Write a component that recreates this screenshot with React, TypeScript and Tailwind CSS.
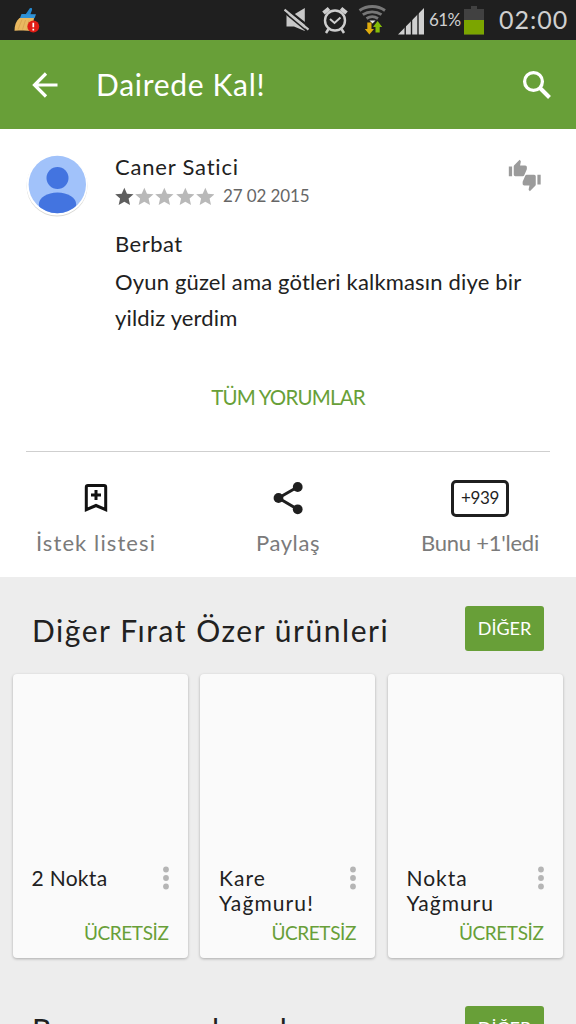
import type { ReactNode } from "react";

const apps = [
  { id: 1, title: "2 Nokta", price: "ÜCRETSİZ", tracking: "tracking-[0.3px]" },
  { id: 2, title: "Kare Yağmuru!", price: "ÜCRETSİZ", tracking: "tracking-[1.1px]" },
  { id: 3, title: "Nokta Yağmuru", price: "ÜCRETSİZ", tracking: "tracking-[1px]" },
];

const STAR = "M12 1.6l3.1 7.1 7.7.7-5.8 5.1 1.7 7.6L12 18.1l-6.7 4 1.7-7.6-5.8-5.1 7.7-.7z";
const THUMB =
  "M1 21h4V9H1v12zm22-11c0-1.1-.9-2-2-2h-6.31l.95-4.57.03-.32c0-.41-.17-.79-.44-1.06L14.17 1 7.59 7.59C7.22 7.95 7 8.45 7 9v10c0 1.1.9 2 2 2h9c.83 0 1.54-.5 1.84-1.22l3.02-7.05c.09-.23.14-.47.14-.73v-2z";

function CleanerIcon() {
  return (
    <svg className="ml-[13px] h-8 w-7" viewBox="0 0 28 32">
      <path d="M16 5.500c1-2.200 3.800-1.900 3 .4L17 11.500l-4.500-1z" fill="#2589d0" />
      <path d="M8.500 10l14.500.2-1.500 4-14.500-.2z" fill="#2f92d6" />
      <path d="M6.500 14h14.500l-2 13c-5.500-.8-11.500-.6-17.500-.3 0-5.300 1.500-9.500 5-12.700z" fill="#e9b860" />
      <path d="M9 15.500l-4 10M12.500 16l-3 9.500M16 16.500l-2 9" stroke="#d29d4b" strokeWidth="0.700" fill="none" />
      <circle cx="20.300" cy="22.500" r="5.900" fill="#e01b14" />
      <path d="M20.300 18.800v4.400M20.300 24.700v1.700" stroke="#fff" strokeWidth="1.700" />
    </svg>
  );
}

function StatusBar() {
  return (
    <div className="flex h-10 items-center bg-[#1f1f1f] text-[#cfcfcf]">
      <CleanerIcon />
      <svg className="ml-[243px] h-10 w-[27px] shrink-0" viewBox="284 0 27 40">
        <path d="M286.500 14.500h7.500L304.800 8v23L294 26.500h-7.500z" fill="#c8c8c8" />
        <path d="M285 7.800l25.500 20" stroke="#1f1f1f" strokeWidth="2.400" />
        <path d="M284.500 9.700l24 20" stroke="#c8c8c8" strokeWidth="2.200" />
        <path d="M284 12.200l22 18.300" stroke="#1f1f1f" strokeWidth="1.500" />
      </svg>
      <svg className="ml-[10px] h-10 w-7 shrink-0" viewBox="321 0 28 40" fill="none" stroke="#cdcdcd">
        <circle cx="335" cy="20.500" r="10" strokeWidth="2.400" />
        <path d="M330 19l4.500 4 6-5.500" strokeWidth="2" />
        <path d="M323.500 13l5.500-4.500M341 8.500l5.500 4.500" strokeWidth="4" />
        <path d="M328.500 29l-2.500 4M341.500 29l2.500 4" strokeWidth="2.500" />
      </svg>
      <svg className="ml-2 h-10 w-[30px] shrink-0" viewBox="357 0 30 40" fill="none">
        <path d="M359.500 10.500c7.500-5.300 18-5.300 25.500 0M362.800 14.700c5.500-3.800 13.200-3.800 18.700 0M366.500 18.500c3.500-2.200 8-2.200 11.500 0" stroke="#777" strokeWidth="2.800" />
        <path d="M369.500 20.500h6l-3 3z" fill="#eee" />
        <path d="M367.300 22.500h4.200v6.500h2.500l-4.600 5.500-4.600-5.500h2.500z" fill="#dfac0d" />
        <path d="M375.500 32.500h4.200V27h2.500l-4.600-6-4.600 6h2.500z" fill="#85bd08" />
      </svg>
      <svg className="ml-[11px] h-10 w-[26px] shrink-0" viewBox="398 0 26 40">
        <path d="M398 34.500L424 8v26.500z" fill="#d0d0d0" />
        <path d="M405.200 22v14M411.500 16v20M418 10v26" stroke="#1f1f1f" strokeWidth="1.400" />
      </svg>
      <span className="ml-[5px] w-[33px] text-[17px] tracking-[-0.6px] whitespace-nowrap">61%</span>
      <svg className="ml-[2px] h-10 w-5 shrink-0" viewBox="464 0 20 40">
        <path d="M464 9h7V6h6v3h7v25.500h-20z" fill="#414141" />
        <path d="M464 20h20v14.500h-20z" fill="#7ba500" />
      </svg>
      <span className="ml-[15px] text-[25px] tracking-[1px] whitespace-nowrap">02:00</span>
    </div>
  );
}

function Header() {
  return (
    <header className="flex h-[89px] items-center bg-[#689f38] text-white">
      <svg className="ml-8 h-[26px] w-[26px]" viewBox="0 0 26 26" fill="none" stroke="currentColor" strokeWidth="3.200">
        <path d="M25.500 13H3M14 1.500L2.500 13 14 24.500" />
      </svg>
      <h1 className="ml-[38px] text-[30px] tracking-[0.7px]">Dairede Kal!</h1>
      <svg className="mr-[24px] ml-auto h-[30px] w-[30px]" viewBox="0 0 30 30" fill="none" stroke="currentColor">
        <circle cx="11.500" cy="11.500" r="8.900" strokeWidth="3.300" />
        <path d="M18 18l9.500 9.500" strokeWidth="4" />
      </svg>
    </header>
  );
}

function Avatar() {
  return (
    <svg className="mt-[3px] ml-[26px] h-[63px] w-[62px] shrink-0" viewBox="0 0 62 63">
      <circle cx="31" cy="32" r="30.500" fill="#d9d9d5" />
      <circle cx="31" cy="31" r="30.500" fill="#fff" />
      <clipPath id="face">
        <circle cx="31.300" cy="30.500" r="28.700" />
      </clipPath>
      <g clipPath="url(#face)">
        <path d="M0 0h62v62H0z" fill="#a1c2fa" />
        <circle cx="31.500" cy="24" r="11" fill="#4374e0" />
        <ellipse cx="31.500" cy="50.500" rx="18.700" ry="12" fill="#4374e0" />
      </g>
    </svg>
  );
}

function Review() {
  return (
    <div className="flex pt-[22px]">
      <Avatar />
      <div className="ml-[27px] w-[415px] pt-px">
        <p className="text-[22px] leading-[30px] tracking-[0.8px]">Caner Satici</p>
        <div className="flex h-7 items-center">
          {[1, 2, 3, 4, 5].map((n) => (
            <svg key={n} className={n === 1 ? "mr-[1.500px] h-[19px] w-[18.700px] text-[#5e5e5e]" : "mr-[1.500px] h-[19px] w-[18.700px] text-[#b9b9b9]"} viewBox="1 1 22 22" fill="currentColor">
              <path d={STAR} />
            </svg>
          ))}
          <span className="ml-[7px] text-[17px] tracking-[-0.1px] text-[#666]">27 02 2015</span>
        </div>
        <p className="mt-4 text-[22px] leading-9 tracking-[0.5px]">Berbat</p>
        <p className="mt-[2px] text-[22px] leading-9 tracking-[0.17px] whitespace-nowrap">
          Oyun güzel ama götleri kalkmasın diye bir
          <br />
          yildiz yerdim
        </p>
      </div>
      <svg className="mt-[8px] -ml-[22px] h-[34px] w-[34px] shrink-0" viewBox="0 0 34 34" fill="#9b9b9b">
        <path transform="translate(0 0) scale(0.82)" d={THUMB} />
        <path transform="translate(33.500 33) rotate(180) scale(0.82)" d={THUMB} />
      </svg>
    </div>
  );
}

function Action({ icon, label, tracking }: { icon: ReactNode; label: string; tracking: string }) {
  return (
    <div className="flex w-48 flex-col items-center">
      <div className="flex h-10 items-center">{icon}</div>
      <span className={`mt-[10px] text-[22px] leading-[30px] text-[#7b7b7b] ${tracking}`}>{label}</span>
    </div>
  );
}

function Actions() {
  return (
    <div className="flex pt-[26px] text-[#1f1f1f]">
      <Action
        label="İstek listesi"
        tracking="tracking-[1.1px]"
        icon={
          <svg className="h-[30px] w-[24px]" viewBox="0 0 24 30" fill="none" stroke="#111" strokeWidth="3">
            <path d="M2.300 26.700V4.200Q2.300 2.500 4 2.500H20Q21.700 2.500 21.700 4.200V26.700L12 22.500zM12 7v10M7 12h10" />
          </svg>
        }
      />
      <Action
        label="Paylaş"
        tracking="tracking-[0.6px]"
        icon={
          <svg className="h-[34px] w-[30px]" viewBox="0 0 30 34" fill="currentColor">
            <path d="M25 5.800L5.500 17 25 28.500" fill="none" stroke="currentColor" strokeWidth="3" />
            <circle cx="24.700" cy="6" r="4.900" />
            <circle cx="5.500" cy="17" r="4.900" />
            <circle cx="24.700" cy="28.300" r="4.900" />
          </svg>
        }
      />
      <Action
        label="Bunu +1'ledi"
        tracking="tracking-[-0.25px]"
        icon={
          <div className="flex h-[37px] w-[58px] items-center justify-center rounded-[5px] border-3 border-[#1f1f1f] text-[17px] tracking-[-0.3px]">
            +939
          </div>
        }
      />
    </div>
  );
}

function SectionHeader({ title }: { title: string }) {
  return (
    <div className="flex h-[45px] items-center justify-between pr-8 pl-8">
      <h2 className="pt-[3px] text-[30px] tracking-[1.55px] whitespace-nowrap">{title}</h2>
      <button className="h-[45px] w-[79px] rounded-[3px] bg-[#689f38] text-[18px] text-white">DİĞER</button>
    </div>
  );
}

function AppCard({ title, price, tracking }: { title: string; price: string; tracking: string }) {
  return (
    <div className="flex h-[284px] w-[175px] flex-col rounded-[4px] bg-[#fafafa] pt-[191px] pr-[19px] pl-[19px] shadow-[0_1px_3px_rgba(0,0,0,0.28)]">
      <div className="flex h-[54px] justify-between">
        <h3 className={`w-[110px] text-[21px] leading-[25px] ${tracking}`}>{title}</h3>
        <svg className="mt-px h-6 w-[6px] shrink-0" viewBox="0 0 6 24" fill="#b5b5b5">
          <circle cx="3" cy="3.500" r="2.900" />
          <circle cx="3" cy="12" r="2.900" />
          <circle cx="3" cy="20.500" r="2.900" />
        </svg>
      </div>
      <p className="text-right text-[19px] leading-[27px] tracking-[-0.4px] text-[#689f38]">{price}</p>
    </div>
  );
}

export default function App() {
  return (
    <div className="h-[1024px] w-[576px] overflow-hidden bg-[#ededed] font-[Lato,sans-serif] text-[#212121]">
      <StatusBar />
      <Header />
      <main>
        <section className="h-[448px] bg-white">
          <Review />
          <button className="mx-auto mt-10 block h-[42px] text-[20.500px] tracking-[-0.8px] text-[#689f38]">TÜM YORUMLAR</button>
          <hr className="mx-[26px] mt-[33px] border-[#cfcfcf]" />
          <Actions />
        </section>
        <section className="pt-[29px]">
          <SectionHeader title="Diğer Fırat Özer ürünleri" />
          <div className="mt-[23px] flex gap-[12.500px] pl-[12.500px]">
            {apps.map((a) => (
              <AppCard key={a.id} title={a.title} price={a.price} tracking={a.tracking} />
            ))}
          </div>
        </section>
        <section className="pt-[47.500px]">
          <SectionHeader title="Benzer uygulamalar" />
        </section>
      </main>
    </div>
  );
}
